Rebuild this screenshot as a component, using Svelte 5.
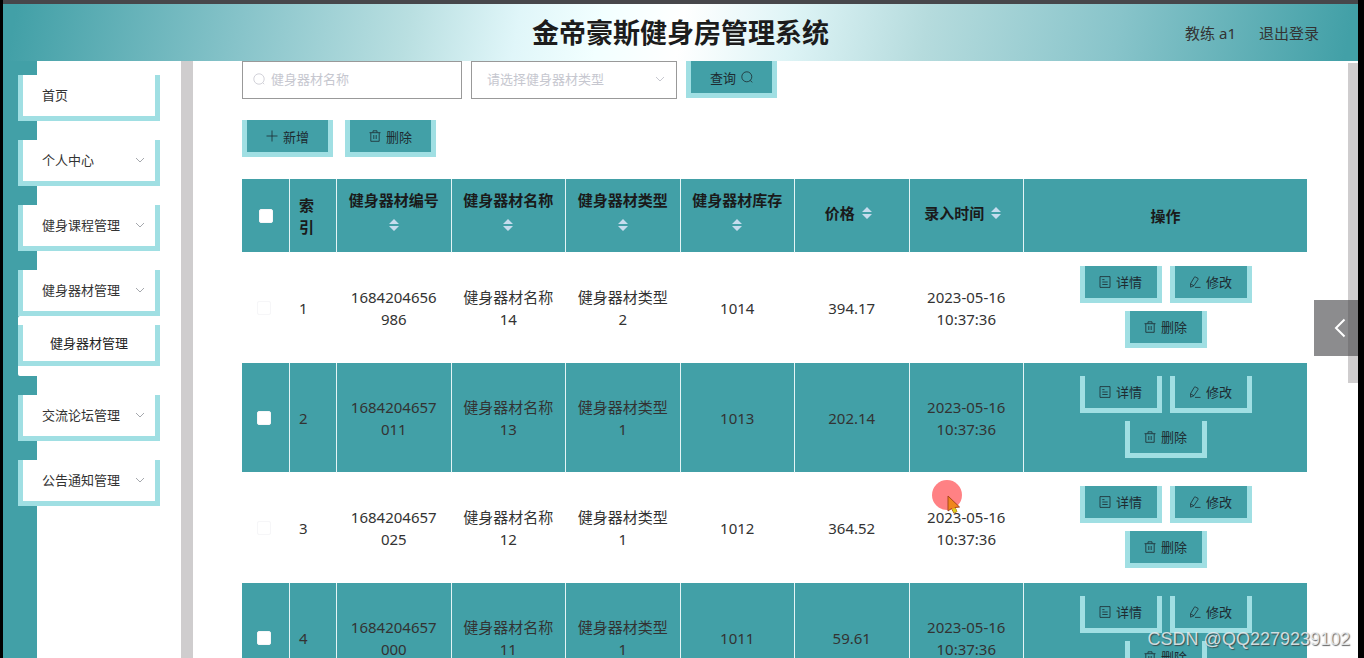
<script lang="ts">
  interface MenuItem {
    label: string;
    arrow?: boolean;
    children?: string[];
  }

  interface Equipment {
    id: number;
    code: string;
    name: string;
    type: string;
    stock: number;
    price: string;
    time: string;
  }

  const menu: MenuItem[] = [
    { label: "首页" },
    { label: "个人中心", arrow: true },
    { label: "健身课程管理", arrow: true },
    { label: "健身器材管理", arrow: true, children: ["健身器材管理"] },
    { label: "交流论坛管理", arrow: true },
    { label: "公告通知管理", arrow: true },
  ];

  const columns = ["健身器材编号", "健身器材名称", "健身器材类型", "健身器材库存", "价格", "录入时间"];

  const rows: Equipment[] = [
    { id: 1, code: "1684204656986", name: "健身器材名称14", type: "健身器材类型2", stock: 1014, price: "394.17", time: "2023-05-16 10:37:36" },
    { id: 2, code: "1684204657011", name: "健身器材名称13", type: "健身器材类型1", stock: 1013, price: "202.14", time: "2023-05-16 10:37:36" },
    { id: 3, code: "1684204657025", name: "健身器材名称12", type: "健身器材类型1", stock: 1012, price: "364.52", time: "2023-05-16 10:37:36" },
    { id: 4, code: "1684204657000", name: "健身器材名称11", type: "健身器材类型1", stock: 1011, price: "59.61", time: "2023-05-16 10:37:36" },
  ];

  let keyword = $state("");
  let kind = $state("");
  let selected: number[] = $state([]);
  let allSelected = $derived(selected.length === rows.length);

  function toggleAll() {
    selected = allSelected ? [] : rows.map((row) => row.id);
  }
</script>

{#snippet icon(name: string)}
  <svg class="icon" viewBox="0 0 12 12" aria-hidden="true">
    {#if name === "search"}
      <circle cx="5.8" cy="5.8" r="5" />
      <path d="M9.3 9.4L11.2 11.4" />
    {:else if name === "circle"}
      <circle cx="6" cy="6" r="5.2" />
      <path d="M9.7 9.7L11.2 11.2" />
    {:else if name === "plus"}
      <path d="M6 0.5V11.5M0.5 6H11.5" />
    {:else if name === "trash"}
      <path d="M0.5 2.7H11.5M4 2.5V0.8H8V2.5M1.8 2.8V11.3H10.2V2.8M4.8 5V9M7.2 5V9" />
    {:else if name === "detail"}
      <path d="M1 0.6H11V11.4H1ZM3.3 3.6H5.5M3.3 6H8.7M3.3 8.5H8.7" />
    {:else if name === "edit"}
      <path d="M6.2 0.9L9 2.4Q9.4 2.8 9.1 3.3L5 9.6L1.6 11.2L1.5 7.7L5.3 1.3Q5.7 0.7 6.2 0.9ZM1.6 7.9L4.8 9.7M6 11.4H11.5" />
    {/if}
  </svg>
{/snippet}

{#snippet chevron()}
  <svg class="chevron" viewBox="0 0 10 10" aria-hidden="true">
    <path d="M1 3L5 7L9 3" />
  </svg>
{/snippet}

<div class="app">
  <header class="header">
    <h1>金帝豪斯健身房管理系统</h1>
    <div class="user">
      <span>教练 a1</span>
      <a href="#logout">退出登录</a>
    </div>
  </header>

  <div class="body">
    <nav class="sidebar">
      {#each menu as item}
        <div class="menu-group">
          <button class="menu-item" type="button">
            <span>{item.label}</span>
            {#if item.arrow}
              {@render chevron()}
            {/if}
          </button>
          {#if item.children}
            <div class="submenu">
              {#each item.children as child}
                <a class="submenu-item" href="#equipment">{child}</a>
              {/each}
            </div>
          {/if}
        </div>
      {/each}
    </nav>
    <div class="sidebar-scroll"></div>

    <main class="content">
      <form class="filters" onsubmit={(e) => e.preventDefault()}>
        <label class="field field-input">
          {@render icon("circle")}
          <input type="text" placeholder="健身器材名称" aria-label="健身器材名称" bind:value={keyword} />
        </label>
        <label class="field field-select">
          <select aria-label="健身器材类型" bind:value={kind}>
            <option value="">请选择健身器材类型</option>
            <option value="1">健身器材类型1</option>
            <option value="2">健身器材类型2</option>
          </select>
          {@render chevron()}
        </label>
        <button class="btn" type="submit">查询{@render icon("search")}</button>
      </form>

      <div class="toolbar">
        <button class="btn" type="button">{@render icon("plus")}新增</button>
        <button class="btn" type="button">{@render icon("trash")}删除</button>
      </div>

      <table>
        <colgroup>
          <col class="col-check" />
          <col class="col-index" />
          {#each columns as _}
            <col />
          {/each}
          <col class="col-actions" />
        </colgroup>
        <thead>
          <tr>
            <th><input type="checkbox" aria-label="全选" checked={allSelected} onchange={toggleAll} /></th>
            <th class="index">索引</th>
            {#each columns as column}
              <th>
                <div class="sortable">
                  <span>{column}</span>
                  <span class="caret">
                    <svg viewBox="0 0 10 12" aria-hidden="true">
                      <path d="M5 0L10 5H0ZM5 12L0 7H10Z" />
                    </svg>
                  </span>
                </div>
              </th>
            {/each}
            <th>操作</th>
          </tr>
        </thead>
        <tbody>
          {#each rows as row (row.id)}
            <tr>
              <td class="check"><input type="checkbox" aria-label="选择 {row.id}" value={row.id} bind:group={selected} /></td>
              <td class="index">{row.id}</td>
              <td>{row.code}</td>
              <td>{row.name}</td>
              <td>{row.type}</td>
              <td>{row.stock}</td>
              <td>{row.price}</td>
              <td>{row.time}</td>
              <td>
                <div class="actions">
                  <button class="btn btn-small" type="button">{@render icon("detail")}详情</button>
                  <button class="btn btn-small" type="button">{@render icon("edit")}修改</button>
                  <button class="btn btn-small" type="button">{@render icon("trash")}删除</button>
                </div>
              </td>
            </tr>
          {/each}
        </tbody>
      </table>
    </main>
    <div class="page-scroll"><div class="thumb"></div></div>
  </div>

  <button class="drawer" type="button" aria-label="展开">
    <svg viewBox="0 0 12 20" aria-hidden="true"><path d="M10.5 1.5L2 10L10.5 18.5" /></svg>
  </button>

  <div class="pointer">
    <svg viewBox="0 0 32 34" aria-hidden="true">
      <circle cx="15" cy="15" r="15" fill="#ff8184" />
      <path d="M16 16V31L19.5 28.5L22 33L25 31.5L23 27.5L27.5 27Z" fill="#f0861c" stroke="#a8441c" />
      <path d="M20 29L22 33L25 31.5L23.5 28Z" fill="#d8cf20" />
    </svg>
  </div>

  <div class="watermark">CSDN @QQ2279239102</div>
</div>

<style>
  :global(body) {
    background: #000;
  }
  .app {
    --teal: #42a0a7;
    --edge: #a0dfe3;
    position: relative;
    box-sizing: border-box;
    height: 100vh;
    padding: 0 6px 0 3px;
    overflow: hidden;
    display: flex;
    flex-direction: column;
    font-family: "Noto Sans", "Noto Sans CJK SC", sans-serif;
    font-size: 15px;
    color: #333;
  }
  button,
  input,
  select {
    font: inherit;
    color: inherit;
  }
  .header {
    flex: none;
    position: relative;
    box-sizing: border-box;
    height: 61px;
    border-top: 4px solid #47474b;
    display: flex;
    align-items: center;
    justify-content: center;
    background: linear-gradient(100deg, #42a0a7 1%, #88c4ca 18%, #b9dfe1 30%, #e0f6f9 38%, #f2ffff 44%, #fff 50%, #def4f6 58%, #b5dbdd 68%, #88c4ca 82%, #42a0a7 99%);
  }
  h1 {
    margin: 0;
    font-size: 27px;
    line-height: 36px;
    font-weight: 700;
    color: #1c1c1c;
  }
  .user {
    position: absolute;
    right: 39px;
    display: flex;
    gap: 23px;
  }
  .user a {
    color: inherit;
    text-decoration: none;
  }
  .body {
    flex: 1;
    min-height: 0;
    display: flex;
    background: #fff;
  }
  .sidebar {
    flex: none;
    box-sizing: border-box;
    width: 178px;
    padding: 14px 21px 0 15px;
    display: flex;
    flex-direction: column;
    gap: 19px;
    font-size: 13px;
    background: linear-gradient(to right, var(--teal) 34px, #fff 34px);
  }
  .menu-item {
    box-sizing: border-box;
    width: 100%;
    height: 46px;
    padding: 0 10px 2px 19px;
    border: 5px solid var(--edge);
    border-top: 0;
    background: #fff;
    display: flex;
    align-items: center;
    justify-content: space-between;
  }
  .submenu {
    padding: 9px 0 10px;
    border-radius: 2px;
    background: #fff;
  }
  .submenu-item {
    box-sizing: border-box;
    height: 41px;
    border: 5px solid var(--edge);
    border-top: 0;
    display: flex;
    align-items: center;
    justify-content: center;
    line-height: 36px;
    color: #222;
    text-decoration: none;
  }
  .sidebar-scroll {
    flex: none;
    width: 12px;
    background: #cfcdce;
  }
  .chevron {
    flex: none;
    width: 10px;
    height: 10px;
    fill: none;
    stroke: #a5a8ad;
  }
  .content {
    flex: 1;
    min-width: 0;
    padding: 0 41px 0 49px;
  }
  .filters {
    display: flex;
    gap: 9px;
  }
  .field {
    box-sizing: border-box;
    height: 38px;
    border: 1px solid #999;
    display: flex;
    align-items: center;
    font-size: 13px;
    color: #c6c7cf;
  }
  .field .icon,
  .field .chevron {
    stroke: #c6c7cf;
  }
  .field-input {
    width: 220px;
    padding: 0 10px 2px;
    gap: 6px;
  }
  .field-select {
    width: 206px;
    padding: 0 11px 2px 15px;
  }
  .field input,
  .field select {
    flex: 1;
    min-width: 0;
    padding: 0;
    border: 0;
    outline: 0;
    background: none;
    appearance: none;
  }
  .field input::placeholder {
    color: #c6c7cf;
  }
  .icon {
    flex: none;
    width: 12px;
    height: 12px;
    fill: none;
    stroke: currentColor;
    stroke-width: 0.8;
  }
  .toolbar {
    display: flex;
    gap: 12px;
    padding: 21px 0 22px;
  }
  .btn {
    box-sizing: border-box;
    width: 91px;
    height: 37px;
    padding: 0;
    border: 5px solid var(--edge);
    border-top: 0;
    background: var(--teal);
    display: flex;
    align-items: center;
    justify-content: center;
    gap: 5px;
    font-size: 13px;
    color: #1d2b30;
  }
  .btn-small {
    width: 82px;
  }
  table {
    width: 100%;
    table-layout: fixed;
    border-collapse: separate;
    border-spacing: 0;
    line-height: 22px;
    text-align: center;
  }
  .col-check {
    width: 48px;
  }
  .col-index {
    width: 47px;
  }
  .col-actions {
    width: 283px;
  }
  th,
  td {
    box-sizing: border-box;
    padding: 0 11px;
    border-right: 1px solid #e4f4f5;
    border-bottom: 1px solid #fff;
    overflow-wrap: break-word;
  }
  tbody tr:nth-child(odd) td {
    border-right-color: #fff;
  }
  th:last-child,
  td:last-child {
    border-right: 0;
  }
  th {
    height: 74px;
    background: var(--teal);
    color: #1a1a1a;
    font-weight: 700;
  }
  td {
    height: 110px;
  }
  th.index,
  td.index {
    padding: 0 9px;
    text-align: left;
  }
  tbody tr:nth-child(even) {
    background: var(--teal);
  }
  .sortable {
    display: flex;
    flex-wrap: wrap;
    align-items: center;
    justify-content: center;
    padding-bottom: 6px;
    line-height: 24px;
  }
  .caret {
    width: 24px;
    height: 26px;
    display: flex;
    align-items: center;
    justify-content: center;
  }
  .caret svg {
    width: 10px;
    height: 12px;
    fill: #c6dcee;
  }
  input[type="checkbox"] {
    appearance: none;
    box-sizing: border-box;
    display: block;
    width: 14px;
    height: 14px;
    margin: 0 auto;
    border: 1px solid #f6f6f8;
    border-radius: 2px;
    background: #fff;
  }
  input[type="checkbox"]:checked {
    background: #7ec4ca;
  }
  td.check {
    padding: 0 14px 0 10px;
  }
  .actions {
    display: flex;
    flex-wrap: wrap;
    justify-content: center;
    gap: 8px;
    padding: 0 40px 2px;
  }
  .page-scroll {
    flex: none;
    width: 10px;
    padding-top: 2px;
  }
  .thumb {
    height: 320px;
    background: #cfcdce;
  }
  .drawer {
    position: absolute;
    top: 300px;
    right: 6px;
    width: 44px;
    height: 56px;
    padding: 0 12px 0 0;
    border: 0;
    background: rgba(70, 70, 72, 0.62);
    display: flex;
    align-items: center;
    justify-content: flex-end;
  }
  .drawer svg {
    width: 12px;
    height: 20px;
    fill: none;
    stroke: #fff;
    stroke-width: 2;
  }
  .pointer {
    position: absolute;
    left: 932px;
    top: 480px;
    pointer-events: none;
  }
  .pointer svg {
    display: block;
    width: 32px;
    height: 34px;
  }
  .watermark {
    position: absolute;
    right: 14px;
    bottom: 8px;
    font-family: "Liberation Sans", sans-serif;
    font-size: 18px;
    line-height: 22px;
    color: rgba(235, 238, 240, 0.85);
    text-shadow: 1px 1px 1px rgba(60, 60, 60, 0.8);
  }
</style>
